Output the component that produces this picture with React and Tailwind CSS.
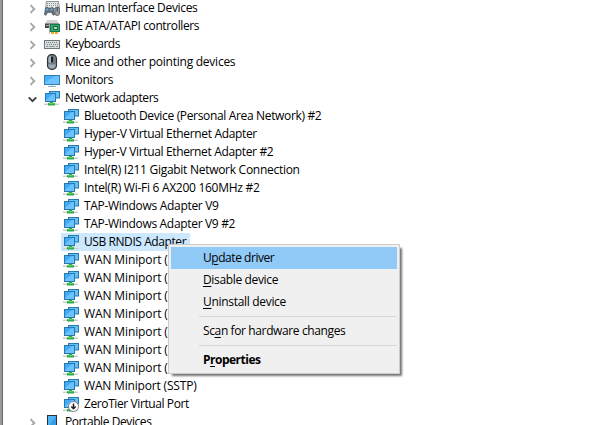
import React from "react";

function Hid() {
  return (
    <svg width="16" height="16" viewBox="0 0 16 16" className="shrink-0">
      <path d="M2 1h13l1 8H1z" fill="#8c9498" />
      <path d="M2.800 2h11.500l.5 6H2z" fill="#e4e7e9" />
      <path d="M3 3.500h11M3 5.500h11" stroke="#858c90" strokeDasharray="1 1" shapeRendering="crispEdges" />
      <path d="M1.500 8C2.500 6.600 4 7 4.500 8h2C7.500 6.700 9 7.200 9.500 8.500L10.600 14.500C10 15.800 8.700 15.600 7.500 12.500H3.500C2.500 15.600 1 15.800.4 14.500Z" fill="#66717a" stroke="#465057" strokeWidth=".6" />
      <circle cx="3.200" cy="9.500" r="1.100" fill="#55b2f5" />
      <circle cx="7.600" cy="9.500" r="1.100" fill="#55b2f5" />
      <rect x="10.900" y="7.100" width="4.600" height="8.400" rx="2.200" fill="#9ba4aa" stroke="#465057" strokeWidth=".8" />
      <path d="M13.200 7.500v4" stroke="#343b40" />
    </svg>
  );
}

function Ide() {
  return (
    <svg width="16" height="16" viewBox="0 0 16 16" className="shrink-0">
      <path d="M3 2h10l2 4H1z" fill="#d2d5d6" />
      <path d="M1 5.500h14V10H1z" fill="#44494b" />
      <path d="M2 7.500h3" stroke="#a0a5a7" />
      <path d="M6 6h10v8H6z" fill="#17774a" />
      <path d="M7 7h8v6H7z" fill="#35a96a" />
      <path d="M9.500 8.500h4v3h-4z" fill="#a9d9be" stroke="#136440" />
      <path d="M7 15h7" stroke="#efa91f" strokeWidth="2" strokeDasharray="3 1" />
      <path d="M5.500 6v9.500" stroke="#a3acb0" />
    </svg>
  );
}

function Keyboard() {
  return (
    <svg width="16" height="16" viewBox="0 0 16 16" className="shrink-0" shapeRendering="crispEdges">
      <rect x="0" y="4" width="16" height="9" fill="#6f787d" />
      <rect x="1" y="5" width="14" height="7" fill="#d9dde0" />
      <path d="M2 6.500h12M3 8.500h11" stroke="#737b7f" strokeDasharray="1 1" />
      <path d="M2 10.500h2M5 10.500h6M12 10.500h2" stroke="#8c9498" />
    </svg>
  );
}

function Mouse() {
  return (
    <svg width="16" height="16" viewBox="0 0 16 16" className="shrink-0">
      <rect x="3.500" y=".6" width="9" height="14.800" rx="4" fill="#707c86" stroke="#2d3439" strokeWidth="1.100" />
      <path d="M4.500 8V5Q5 2 7 1.500V9Q5.500 9 4.500 8z" fill="#aab5bd" />
      <path d="M4.500 10Q8 11.500 11.500 10v1.500Q10.500 14.500 8 14.500T4.500 11.500z" fill="#a1abb3" />
      <rect x="7" y="2.500" width="2" height="6" rx="1" fill="#171b1e" />
    </svg>
  );
}

function Monitor() {
  return (
    <svg width="16" height="16" viewBox="0 0 16 16" className="shrink-0">
      <rect x=".5" y="3.500" width="15" height="9" fill="#45b0fa" stroke="#2f7fb0" />
      <path d="M1 12V10L11 4h4v8z" fill="#6cc3ff" />
      <path d="M7 13h2v1H7z" fill="#c9dfeb" />
      <path d="M4 14.500h8" stroke="#86b4cc" />
    </svg>
  );
}

function Network({ disabled }) {
  return (
    <svg width="16" height="16" viewBox="0 0 16 16" className="shrink-0">
      <path d="M0 14h15" stroke="#c9cccd" strokeWidth="2" />
      <path d="M0 13.500h15" stroke="#e6e8e8" />
      <path d="M6 11h3v1.500l2 .8V15.500H4V13.300l2-.8z" fill="#35aa48" />
      <path d="M5 13.500h5" stroke="#5fd266" />
      <rect x="5.500" y="1.500" width="10" height="6.500" fill="#62c0fb" stroke="#2878ab" />
      <rect x="1.500" y="3.500" width="10" height="8" fill="#3fabf8" stroke="#2878ab" />
      <path d="M2 11V10L9 4h2v7z" fill="#6ac3ff" />
      {disabled && (
        <g>
          <circle cx="10.500" cy="10.500" r="5" fill="#fff" stroke="#777" strokeWidth=".9" />
          <path d="M10.500 7.500v5M8.300 10.400l2.200 2.300 2.200-2.300" fill="none" stroke="#222" strokeWidth="1.500" />
        </g>
      )}
    </svg>
  );
}

function Portable() {
  return (
    <svg width="16" height="16" viewBox="0 0 16 16" className="shrink-0">
      <rect x="3.500" y="1.500" width="9" height="15" fill="#329fe8" stroke="#292e31" />
      <path d="M4 2h8L4 13z" fill="#4fb4f3" />
    </svg>
  );
}

function Chevron({ open }) {
  return open ? (
    <svg width="9" height="8" viewBox="0 0 9 8" className="ml-[-1px] mr-[1px] mt-[1px] shrink-0">
      <path d="M.7 2.300l3.800 3.800L8.300 2.300" fill="none" stroke="#404040" strokeWidth="1.900" />
    </svg>
  ) : (
    <svg width="9" height="10" viewBox="0 0 9 10" className="mt-[2px] shrink-0">
      <path d="M1.500 1.200l3.800 3.800-3.800 3.800" fill="none" stroke="#a6a6a6" strokeWidth="1.900" />
    </svg>
  );
}

const categories = [
  { label: "Human Interface Devices", Icon: Hid, tracking: "tracking-[-0.33px]" },
  { label: "IDE ATA/ATAPI controllers", Icon: Ide, tracking: "tracking-[-0.38px]" },
  { label: "Keyboards", Icon: Keyboard, tracking: "tracking-[-0.48px]" },
  { label: "Mice and other pointing devices", Icon: Mouse, tracking: "tracking-[-0.25px]" },
  { label: "Monitors", Icon: Monitor, tracking: "tracking-[-0.3px]" },
  { label: "Network adapters", Icon: Network, open: true, tracking: "tracking-[-0.45px]" },
];

const adapters = [
  { label: "Bluetooth Device (Personal Area Network) #2", tracking: "tracking-[-0.34px]" },
  { label: "Hyper-V Virtual Ethernet Adapter", tracking: "tracking-[-0.34px]" },
  { label: "Hyper-V Virtual Ethernet Adapter #2", tracking: "tracking-[-0.35px]" },
  { label: "Intel(R) I211 Gigabit Network Connection", tracking: "tracking-[-0.28px]" },
  { label: "Intel(R) Wi-Fi 6 AX200 160MHz #2", tracking: "tracking-[-0.28px]" },
  { label: "TAP-Windows Adapter V9", tracking: "tracking-[-0.31px]" },
  { label: "TAP-Windows Adapter V9 #2", tracking: "tracking-[-0.32px]" },
  { label: "USB RNDIS Adapter", selected: true, tracking: "tracking-[-0.42px]" },
  { label: "WAN Miniport (", tracking: "tracking-[-0.12px]" },
  { label: "WAN Miniport (", tracking: "tracking-[-0.12px]" },
  { label: "WAN Miniport (", tracking: "tracking-[-0.12px]" },
  { label: "WAN Miniport (", tracking: "tracking-[-0.12px]" },
  { label: "WAN Miniport (", tracking: "tracking-[-0.12px]" },
  { label: "WAN Miniport (", tracking: "tracking-[-0.12px]" },
  { label: "WAN Miniport (", tracking: "tracking-[-0.12px]" },
  { label: "WAN Miniport (SSTP)", tracking: "tracking-[-0.18px]" },
  { label: "ZeroTier Virtual Port", disabled: true, tracking: "tracking-[-0.4px]" },
];

function Category({ label, Icon, open, tracking }) {
  return (
    <div className="flex h-[18px] items-center pl-[26px]">
      <Chevron open={open} />
      <span className="ml-[6px] flex"><Icon /></span>
      <span className={"ml-[5px] " + tracking}>{label}</span>
    </div>
  );
}

function Adapter({ label, disabled, selected, tracking }) {
  return (
    <div className={"ml-[58px] flex h-[18px] items-center pl-[2px] " + (selected ? "w-[129px] bg-[#cce8ff]" : "")}>
      <Network disabled={disabled} />
      <span className={"ml-[5px] " + tracking}>{label}</span>
    </div>
  );
}

function MenuItem({ before = "", hot, after, className = "" }) {
  return (
    <div className={"flex h-[22px] items-center pl-[32px] " + className}>
      <span>{before}<span className="underline decoration-1 underline-offset-[2px]">{hot}</span>{after}</span>
    </div>
  );
}

function Separator() {
  return <div className="flex h-[7px] items-center pl-[28px]"><div className="h-px w-full bg-[#d7d7d7]" /></div>;
}

export default function App() {
  return (
    <div className="relative h-[425px] w-[608px] overflow-hidden whitespace-nowrap bg-white font-['Open_Sans','Noto_Sans',sans-serif] text-[12px] leading-[18px] text-black">
      <div className="flex h-full">
        <div className="w-[3px] shrink-0 border-r border-[#696969] bg-[#9c989b]" />
        <div className="mt-[-1px]">
          {categories.map((c) => <Category key={c.label} {...c} />)}
          {adapters.map((a, i) => <Adapter key={i} {...a} />)}
          <Category label="Portable Devices" Icon={Portable} tracking="tracking-[-0.42px]" />
        </div>
      </div>
      <div className="absolute left-[168px] top-[244px] h-[130px] w-[232px] border border-[#cccccc] bg-[#f0f0f0] p-[2px] shadow-[3px_3px_2px_-1px_rgba(0,0,0,0.55)]">
        <MenuItem before="U" hot="p" after="date driver" className="bg-[#91c9f7] tracking-[-0.45px]" />
        <MenuItem hot="D" after="isable device" className="tracking-[-0.35px]" />
        <MenuItem hot="U" after="ninstall device" className="tracking-[-0.31px]" />
        <Separator />
        <MenuItem before="Sc" hot="a" after="n for hardware changes" className="tracking-[-0.38px]" />
        <Separator />
        <MenuItem before="P" hot="r" after="operties" className="font-bold tracking-[-0.5px]" />
      </div>
    </div>
  );
}
